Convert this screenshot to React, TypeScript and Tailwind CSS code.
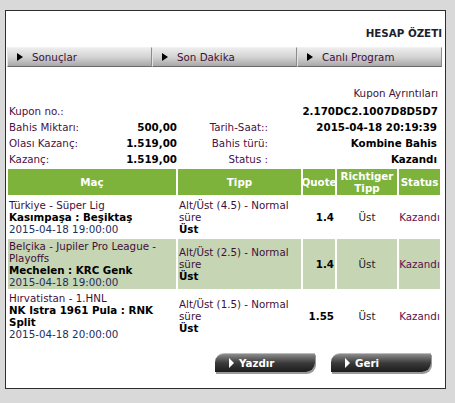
import { FC } from 'react';

const font = { fontFamily: '"DejaVu Sans", Verdana, sans-serif' };

const NavTab: FC<{ label: string }> = ({ label }) => (
  <div className="flex-1 h-[20px] flex items-center border-t border-t-[#f2f2f2] border-l border-l-[#e4e4e4] border-b border-b-[#6a6a6a] border-r border-r-[#8c8c8c] bg-gradient-to-b from-[#ededed] via-[#d3d3d3] to-[#a8a8a8]">
    <span className="ml-[9px] w-0 h-0 border-y-[4px] border-y-transparent border-l-[6px] border-l-black" />
    <span className="ml-[9px] text-[#3f1039]">{label}</span>
  </div>
);

const ActionButton: FC<{ label: string }> = ({ label }) => (
  <div className="w-[100px] h-[19px] flex items-center rounded-tl-[9px] rounded-br-[9px] bg-gradient-to-b from-[#8c8c8c] via-[#3b3b3b] to-[#1c1c1c] border-t border-t-[#bdbdbd] shadow-[1px_2px_0_#9a9a9a]">
    <span className="ml-[14px] w-0 h-0 border-y-[5px] border-y-transparent border-l-[5px] border-l-white" />
    <span className="ml-[5px] text-white font-bold">{label}</span>
  </div>
);

const matches = [
  {
    league: ['Türkiye - Süper Lig'],
    teams: ['Kasımpaşa : Beşiktaş'],
    date: '2015-04-18 19:00:00',
    tipp: ['Alt/Üst (4.5) - Normal', 'süre'],
    quote: '1.4',
    alt: false,
  },
  {
    league: ['Belçika - Jupiler Pro League -', 'Playoffs'],
    teams: ['Mechelen : KRC Genk'],
    date: '2015-04-18 19:00:00',
    tipp: ['Alt/Üst (2.5) - Normal', 'süre'],
    quote: '1.4',
    alt: true,
  },
  {
    league: ['Hırvatistan - 1.HNL'],
    teams: ['NK Istra 1961 Pula : RNK', 'Split'],
    date: '2015-04-18 20:00:00',
    tipp: ['Alt/Üst (1.5) - Normal', 'süre'],
    quote: '1.55',
    alt: false,
  },
];

const App: FC = () => {
  return (
    <div className="w-[455px] h-[403px] bg-[#d9d9d9] pt-[10px] pl-[5px] text-[10.3px] leading-[12px]" style={font}>
      <div className="w-[441px] h-[379px] border border-[#2e2e2e] bg-white flex flex-col">
        <div className="pt-[15px] pr-[3px] text-right font-bold text-[#1e1e2e] leading-[14px]">HESAP ÖZETI</div>

        <div className="mt-[7px] ml-[1px] mr-[3px] flex">
          <NavTab label="Sonuçlar" />
          <NavTab label="Son Dakika" />
          <NavTab label="Canlı Program" />
        </div>

        <div className="mt-[18px] pr-[7px] text-right leading-[16px] text-[#3f1039]">Kupon Ayrıntıları</div>

        <div className="mt-[2px] pl-[3px] pr-[7px] leading-[16px]">
          <div className="flex justify-between">
            <span className="text-[#4b1047]">Kupon no.:</span>
            <span className="font-bold text-black">2.170DC2.1007D8D5D7</span>
          </div>
          {[
            ['Bahis Miktarı:', '500,00', 'Tarih-Saat::', '2015-04-18 20:19:39'],
            ['Olası Kazanç:', '1.519,00', 'Bahis türü:', 'Kombine Bahis'],
            ['Kazanç:', '1.519,00', 'Status :', 'Kazandı'],
          ].map(([l1, v1, l2, v2]) => (
            <div key={l1} className="flex">
              <div className="w-[168px] flex justify-between">
                <span className="text-[#4b1047]">{l1}</span>
                <span className="font-bold text-black">{v1}</span>
              </div>
              <div className="w-[91px] text-right text-[#4b1047]">{l2}</div>
              <div className="flex-1 text-right font-bold text-black pr-[1px]">{v2}</div>
            </div>
          ))}
        </div>

        <div className="grid grid-cols-[168px_123px_32px_60px_41px] gap-[2px] p-[2px] w-[436px]">
          <div className="bg-[#7db33b] h-[26px] flex items-center justify-center text-white font-bold">Maç</div>
          <div className="bg-[#7db33b] flex items-center justify-center text-white font-bold">Tipp</div>
          <div className="bg-[#7db33b] flex items-center justify-center text-white font-bold">Quote</div>
          <div className="bg-[#7db33b] flex flex-col items-center justify-center text-white font-bold">
            <span>Richtiger</span>
            <span>Tipp</span>
          </div>
          <div className="bg-[#7db33b] flex items-center justify-center text-white font-bold">Status</div>

          {matches.map((m, i) => {
            const bg = m.alt ? 'bg-[#c6d5b4]' : 'bg-white';
            return [
              <div key={`a${i}`} className={`${bg} px-[1px] py-[1px] min-h-[40px] flex flex-col justify-center whitespace-nowrap`}>
                {m.league.map((l) => (
                  <div key={l} className="text-[#3f1039]">{l}</div>
                ))}
                {m.teams.map((t) => (
                  <div key={t} className="font-bold text-black">{t}</div>
                ))}
                <div className="text-[#1d2f5e]">{m.date}</div>
              </div>,
              <div key={`b${i}`} className={`${bg} px-[1px] flex flex-col justify-center whitespace-nowrap`}>
                {m.tipp.map((t) => (
                  <div key={t} className="text-[#3f1039]">{t}</div>
                ))}
                <div className="font-bold text-black">Üst</div>
              </div>,
              <div key={`c${i}`} className={`${bg} flex items-center justify-end pr-[1px] font-bold text-black`}>{m.quote}</div>,
              <div key={`d${i}`} className={`${bg} flex items-center justify-center text-[#1e1e1e]`}>Üst</div>,
              <div key={`e${i}`} className={`${bg} flex items-center justify-center text-[#5a0f4e]`}>Kazandı</div>,
            ];
          })}
        </div>

        <div className="mt-[10px] flex justify-end gap-[16px] pr-[14px]">
          <ActionButton label="Yazdır" />
          <ActionButton label="Geri" />
        </div>
      </div>
    </div>
  );
};

export default App;
